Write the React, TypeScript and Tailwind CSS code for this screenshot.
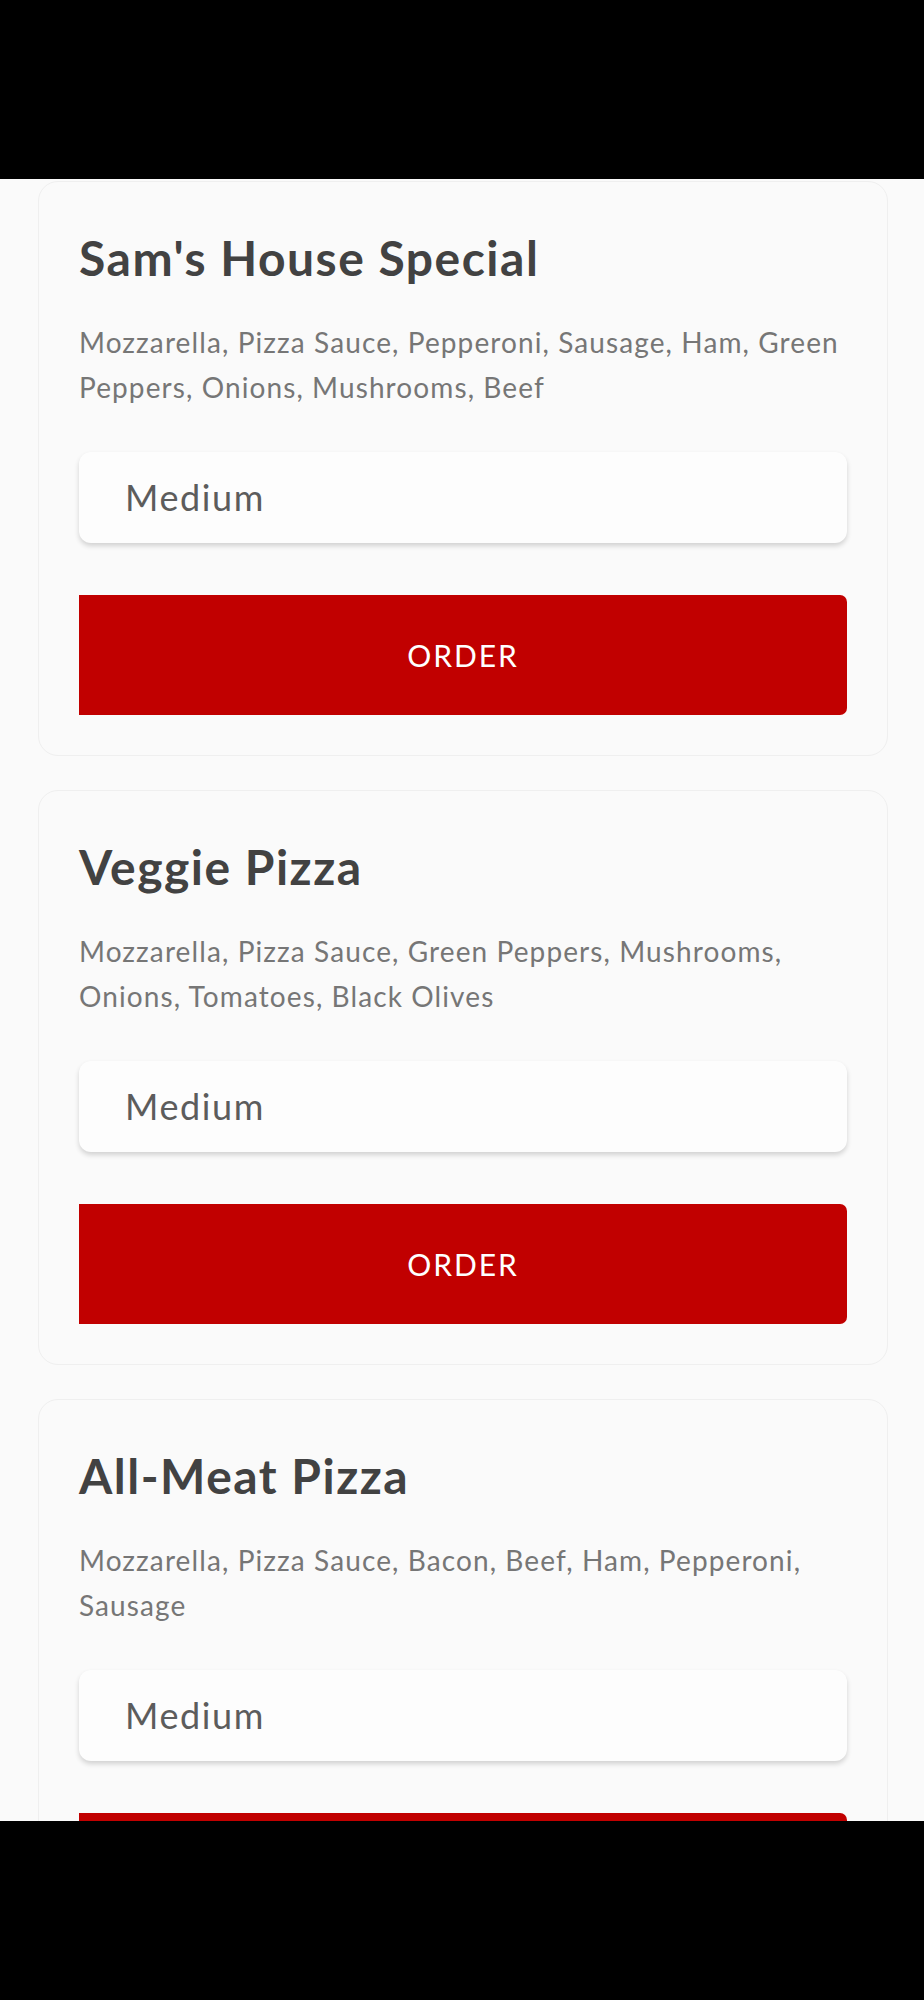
import React from 'react';

type Pizza = {
  name: string;
  toppings: string;
};

const pizzas: Pizza[] = [
  {
    name: "Sam's House Special",
    toppings: 'Mozzarella, Pizza Sauce, Pepperoni, Sausage, Ham, Green Peppers, Onions, Mushrooms, Beef',
  },
  {
    name: 'Veggie Pizza',
    toppings: 'Mozzarella, Pizza Sauce, Green Peppers, Mushrooms, Onions, Tomatoes, Black Olives',
  },
  {
    name: 'All-Meat Pizza',
    toppings: 'Mozzarella, Pizza Sauce, Bacon, Beef, Ham, Pepperoni, Sausage',
  },
];

function PizzaCard({ pizza }: { pizza: Pizza }) {
  return (
    <div className="shrink-0 rounded-[20px] border border-[#efefef] bg-[#fafafa] px-[40px] pt-[48px] pb-[40px]">
      <h2 className="text-[48px] leading-[56px] font-bold tracking-[1.5px] text-[#424242]">{pizza.name}</h2>
      <p className="mt-[34px] text-[28px] leading-[45px] tracking-[1.1px] text-[#767676]">{pizza.toppings}</p>
      <div className="mt-[42px] flex h-[91px] items-center rounded-[12px] bg-[#fdfdfd] pl-[46px] text-[36px] leading-[1.2] tracking-[1.6px] text-[#5c5c5c] shadow-[0_3px_5px_rgba(0,0,0,0.16)]">
        Medium
      </div>
      <button className="mt-[52px] flex h-[120px] w-full items-center justify-center rounded-r-[7px] bg-[#c10000] text-[30px] leading-[36px] tracking-[2px] text-white">
        ORDER
      </button>
    </div>
  );
}

export default function App() {
  return (
    <div className="flex h-[2000px] w-[924px] flex-col bg-black font-['Lato','Liberation_Sans',sans-serif]">
      <div className="h-[179px] shrink-0" />
      <div className="flex h-[1642px] shrink-0 flex-col gap-[34px] overflow-hidden bg-[#fafafa] pl-[38px] pr-[36px] pt-[2px]">
        {pizzas.map((p) => (
          <PizzaCard key={p.name} pizza={p} />
        ))}
      </div>
      <div className="flex-1" />
    </div>
  );
}
